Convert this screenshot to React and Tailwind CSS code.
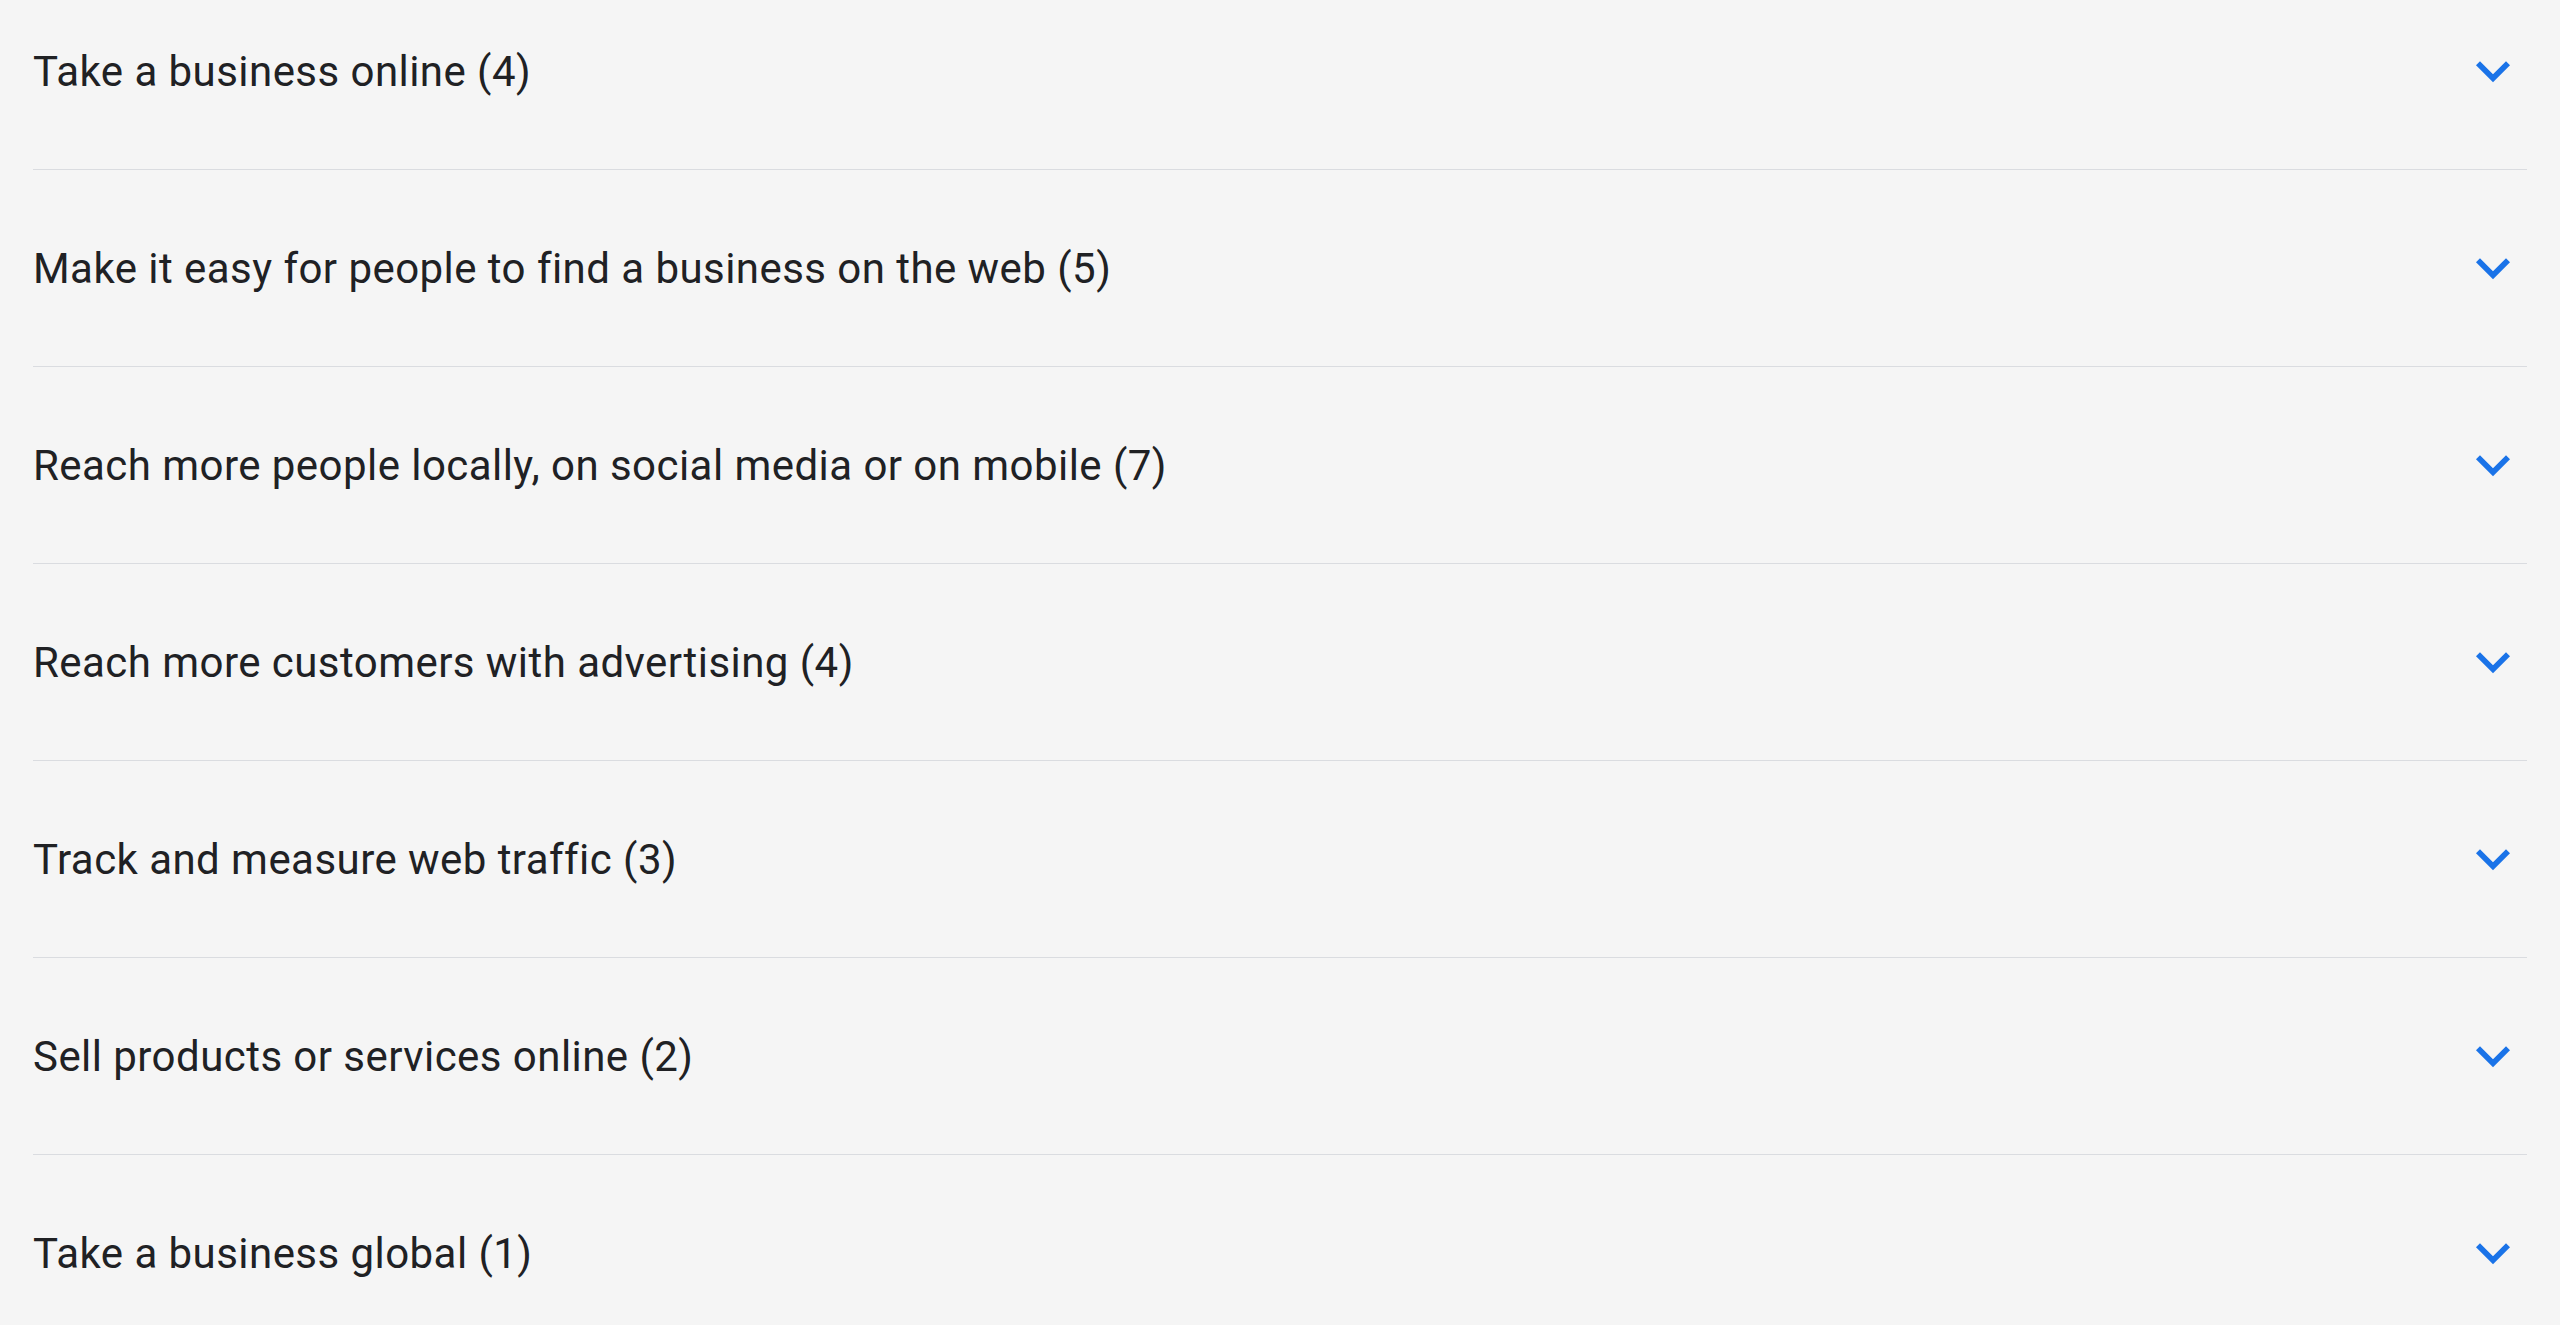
import React from 'react';

const topics = [
  { title: 'Take a business online', count: 4 },
  { title: 'Make it easy for people to find a business on the web', count: 5 },
  { title: 'Reach more people locally, on social media or on mobile', count: 7 },
  { title: 'Reach more customers with advertising', count: 4 },
  { title: 'Track and measure web traffic', count: 3 },
  { title: 'Sell products or services online', count: 2 },
  { title: 'Take a business global', count: 1 },
];

function ExpandMore() {
  return (
    <svg viewBox="0 0 24 24" className="w-[68px] h-[68px] fill-[#1a73e8]">
      <path d="M16.59 8.59L12 13.17 7.41 8.59 6 10l6 6 6-6z" />
    </svg>
  );
}

export default function App() {
  return (
    <div className="h-screen overflow-hidden bg-[#f5f5f5] px-[33px]" style={{ fontFamily: 'Roboto, "Open Sans", sans-serif' }}>
      <div className="-mt-[27px]">
        {topics.map((t) => (
          <button
            key={t.title}
            className="w-full h-[197px] flex items-center justify-between border-b border-[#dadce0] text-left"
          >
            <span className="text-[42px] text-[#202124] tracking-[0.45px]">
              {t.title} ({t.count})
            </span>
            <ExpandMore />
          </button>
        ))}
      </div>
    </div>
  );
}
